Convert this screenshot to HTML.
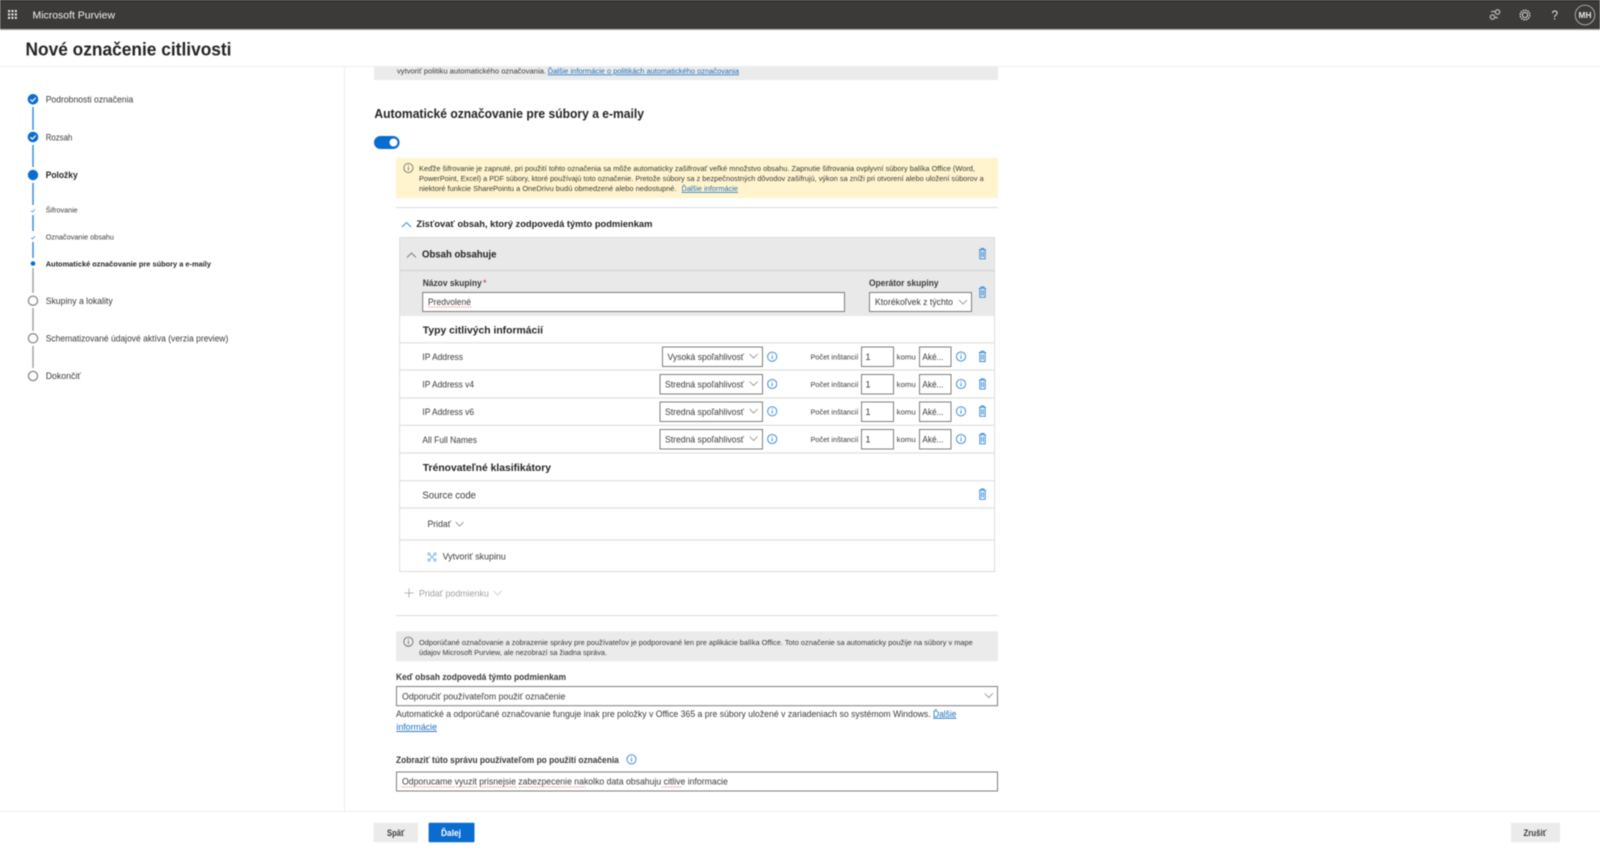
<!DOCTYPE html>
<html lang="sk">
<head>
<meta charset="utf-8">
<title>Nové označenie citlivosti</title>
<style>
html,body{margin:0;padding:0;background:#fff;width:1600px;height:852px;overflow:hidden}
svg{display:block;filter:blur(.4px)}
text{font-family:"Liberation Sans","Noto Sans CJK JP",sans-serif;fill:#3b3a39;font-size:9px;white-space:pre}
.b{font-weight:bold;fill:#252423}
.s{font-size:7.6px}
.m{font-size:8px}
.l{fill:#1a6fbf;text-decoration:underline}
.g{fill:#a19f9d}
.ln{fill:none;stroke:#e4e3e2;stroke-width:1.4}
.box{fill:#fff;stroke:#7f7e7d;stroke-width:1}
.ch{fill:none;stroke:#8a8886;stroke-width:.8}
.chl{fill:none;stroke:#c8c6c4;stroke-width:.8}
.sp{fill:none;stroke:#e06a6a;stroke-width:.7;stroke-dasharray:1.2 1}
</style>
</head>
<body>
<svg width="1600" height="852" viewBox="0 0 1600 852" xmlns="http://www.w3.org/2000/svg">
<defs>
<g id="tr" fill="none" stroke="#2f86d6" stroke-width=".9"><path d="M-3.6-4.2h7.2M-1.4-4.2v-1.3h2.8v1.3M-2.7-4.2v9h5.4v-9M-.9-2.4v5.4M.9-2.4v5.4"/></g>
<g id="inf"><circle r="4.6" fill="none" stroke="#2f86d6" stroke-width=".9"/><path d="M0-1v3.4M0-3v1" stroke="#2f86d6" stroke-width=".9"/></g>
<g id="infd"><circle r="4.6" fill="none" stroke="#605e5c" stroke-width=".8"/><path d="M0-1v3.4M0-3v1" stroke="#605e5c" stroke-width=".8"/></g>
<path id="dn" class="ch" d="M-4-2l4 4 4-4"/>
<path id="dnl" class="chl" d="M-4-2l4 4 4-4"/>
<g id="ck"><circle r="5.3" fill="#0b6cd0"/><path d="M-2.6.2l1.9 1.9 3.4-3.6" fill="none" stroke="#fff" stroke-width="1.2"/></g>
<g id="op"><circle r="4.6" fill="#fff" stroke="#8a8886" stroke-width="1.3"/></g>
<path id="sc" d="M-1.8.2l1.2 1.3 2.6-2.8" fill="none" stroke="#4a98e0" stroke-width=".8"/>
</defs>

<!-- top bar -->
<rect width="1600" height="30" fill="#3b3a39"/>
<rect width="1600" height="1" fill="#151515"/>
<rect y="29" width="1600" height="1.2" fill="#b8b7b5"/>
<g fill="#e8e8e8">
<rect x="8" y="10" width="2.1" height="2.1"/><rect x="11.4" y="10" width="2.1" height="2.1"/><rect x="14.8" y="10" width="2.1" height="2.1"/>
<rect x="8" y="13.4" width="2.1" height="2.1"/><rect x="11.4" y="13.4" width="2.1" height="2.1"/><rect x="14.8" y="13.4" width="2.1" height="2.1"/>
<rect x="8" y="16.8" width="2.1" height="2.1"/><rect x="11.4" y="16.8" width="2.1" height="2.1"/><rect x="14.8" y="16.8" width="2.1" height="2.1"/>
</g>
<text x="32.5" y="18.6" textLength="82.5" lengthAdjust="spacingAndGlyphs" style="font-size:10.5px;fill:#f2f2f2">Microsoft Purview</text>
<g fill="none" stroke="#b5b5b3" stroke-width="1.3">
<circle cx="1497.5" cy="12" r="2.2"/><circle cx="1492.5" cy="17" r="2.2"/><path d="M1491 11.5h4M1495 17.5h2v1"/>
</g>
<circle cx="1525" cy="15" r="2.6" fill="none" stroke="#d8d8d6" stroke-width="1"/>
<circle cx="1525" cy="15" r="4.8" fill="none" stroke="#d8d8d6" stroke-width="1.4" stroke-dasharray="1.6 .9"/>
<text x="1551.5" y="19.5" textLength="6.5" lengthAdjust="spacingAndGlyphs" style="font-size:13px;fill:#e4e4e4">?</text>
<circle cx="1585" cy="15" r="9.8" fill="none" stroke="#b5b5b3" stroke-width=".9"/>
<text x="1578.5" y="18" textLength="13" lengthAdjust="spacingAndGlyphs" style="font-size:8.5px;font-weight:bold;fill:#e8e8e8">MH</text>

<!-- title -->
<text x="25.5" y="55.4" textLength="206" lengthAdjust="spacingAndGlyphs" class="b" style="font-size:18.5px">Nové označenie citlivosti</text>
<rect y="66" width="1600" height="1" fill="#eeedec"/>
<rect x="344" y="67" width="1" height="744" fill="#eeedec"/>

<!-- stepper -->
<g stroke-width="1.4" fill="none">
<path stroke="#2b88e0" d="M33 107v23M33 145v22M33 183v22M33 215v16M33 242v16"/>
<path stroke="#a19f9d" d="M33 268v25M33 308v23M33 346v22"/>
</g>
<use href="#ck" x="33" y="99.3"/>
<use href="#ck" x="33" y="137"/>
<circle cx="33" cy="175" r="5.2" fill="#0b6cd0"/>
<use href="#sc" x="33" y="210.5"/>
<use href="#sc" x="33" y="237.5"/>
<circle cx="33" cy="263.5" r="2.3" fill="#0b6cd0"/>
<use href="#op" x="33" y="300.7"/>
<use href="#op" x="33" y="338.3"/>
<use href="#op" x="33" y="376"/>
<text x="45.7" y="102.6" textLength="87.6" lengthAdjust="spacingAndGlyphs">Podrobnosti označenia</text>
<text x="45.7" y="140.3" textLength="26.6" lengthAdjust="spacingAndGlyphs">Rozsah</text>
<text x="45.7" y="178" textLength="32" lengthAdjust="spacingAndGlyphs" class="b">Položky</text>
<text x="45.7" y="212.6" textLength="32" lengthAdjust="spacingAndGlyphs" class="s">Šifrovanie</text>
<text x="45.7" y="239.5" textLength="68.3" lengthAdjust="spacingAndGlyphs" class="s">Označovanie obsahu</text>
<text x="45.7" y="266.3" textLength="165.3" lengthAdjust="spacingAndGlyphs" class="b s">Automatické označovanie pre súbory a e-maily</text>
<text x="45.7" y="304" textLength="67" lengthAdjust="spacingAndGlyphs">Skupiny a lokality</text>
<text x="45.7" y="341.4" textLength="182.6" lengthAdjust="spacingAndGlyphs">Schematizované údajové aktíva (verzia preview)</text>
<text x="45.7" y="379" textLength="35" lengthAdjust="spacingAndGlyphs">Dokončiť</text>

<!-- top note -->
<rect x="374" y="67" width="624" height="13" fill="#ebebeb"/>
<text x="397" y="73.4" textLength="149" lengthAdjust="spacingAndGlyphs" class="s">vytvoriť politiku automatického označovania.</text>
<text x="547.7" y="73.4" textLength="191.3" lengthAdjust="spacingAndGlyphs" class="s l">Ďalšie informácie o politikách automatického označovania</text>

<text x="374.4" y="118" textLength="269.6" lengthAdjust="spacingAndGlyphs" class="b" style="font-size:12.5px">Automatické označovanie pre súbory a e-maily</text>
<rect x="374" y="136" width="25.6" height="13" rx="6.5" fill="#0b6cd0"/>
<circle cx="393.5" cy="142.5" r="4" fill="#fff"/>

<!-- warning -->
<rect x="396" y="158" width="602" height="40" fill="#fff4ce"/>
<use href="#infd" x="408.4" y="168"/>
<text x="419" y="171" textLength="556" lengthAdjust="spacingAndGlyphs" class="s">Keďže šifrovanie je zapnuté, pri použití tohto označenia sa môže automaticky zašifrovať veľké množstvo obsahu. Zapnutie šifrovania ovplyvní súbory balíka Office (Word,</text>
<text x="419" y="181" textLength="564.7" lengthAdjust="spacingAndGlyphs" class="s">PowerPoint, Excel) a PDF súbory, ktoré používajú toto označenie. Pretože súbory sa z bezpečnostných dôvodov zašifrujú, výkon sa zníži pri otvorení alebo uložení súborov a</text>
<text x="419" y="191" textLength="257.5" lengthAdjust="spacingAndGlyphs" class="s">niektoré funkcie SharePointu a OneDrivu budú obmedzené alebo nedostupné.</text>
<text x="681.5" y="191" textLength="56.5" lengthAdjust="spacingAndGlyphs" class="s l">Ďalšie informácie</text>
<rect x="396" y="207" width="602" height="1" fill="#dcdbda"/>

<path d="M402 227l4.5-4.5 4.5 4.5" fill="none" stroke="#2b88e0" stroke-width=".9"/>
<text x="416.4" y="227" textLength="236" lengthAdjust="spacingAndGlyphs" class="b">Zisťovať obsah, ktorý zodpovedá týmto podmienkam</text>

<!-- card -->
<rect x="399.6" y="237.5" width="595" height="334" fill="#fff" stroke="#dedddc" stroke-width="1"/>
<rect x="400" y="238" width="594" height="78" fill="#e9e9e9"/>
<path d="M400 270.5h594" style="fill:none;stroke:#d4d3d2;stroke-width:1.2"/>
<path d="M407 257.5l4.5-4.5 4.5 4.5" fill="none" stroke="#797775" stroke-width=".9"/>
<text x="422" y="257.5" textLength="74.5" lengthAdjust="spacingAndGlyphs" class="b" style="font-size:10px">Obsah obsahuje</text>
<use href="#tr" x="982.5" y="254"/>

<text x="422.7" y="286" textLength="59" lengthAdjust="spacingAndGlyphs" style="font-weight:bold;font-size:8.8px">Názov skupiny</text>
<text x="483" y="286" style="fill:#c4262e;font-size:9px">*</text>
<rect x="422.7" y="292.5" width="421.8" height="19" class="box"/>
<text x="428" y="305" textLength="43" lengthAdjust="spacingAndGlyphs">Predvolené</text>
<path class="sp" d="M428 307h43"/>
<text x="869" y="286" textLength="69.5" lengthAdjust="spacingAndGlyphs" style="font-weight:bold;font-size:8.8px">Operátor skupiny</text>
<rect x="869.5" y="292.5" width="102" height="19" class="box"/>
<text x="875" y="305" textLength="78" lengthAdjust="spacingAndGlyphs">Ktorékoľvek z týchto</text>
<use href="#dn" x="963" y="302"/>
<use href="#tr" x="982.5" y="292.5"/>

<text x="422.8" y="333.5" textLength="120.2" lengthAdjust="spacingAndGlyphs" class="b" style="font-size:10.5px">Typy citlivých informácií</text>
<path class="ln" d="M400 342.8h594M400 370h594M400 398h594M400 425.3h594M400 453h594M400 480.8h594M400 508h594M400 540h594"/>

<!-- row 1 -->
<text x="422.4" y="360" textLength="40.6" lengthAdjust="spacingAndGlyphs">IP Address</text>
<rect x="662.5" y="347" width="100" height="19.5" class="box"/>
<text x="667.5" y="360" textLength="76.5" lengthAdjust="spacingAndGlyphs">Vysoká spoľahlivosť</text>
<use href="#dn" x="753.6" y="356"/>
<use href="#inf" x="772.2" y="356.7"/>
<text x="810.5" y="359.5" textLength="47.9" lengthAdjust="spacingAndGlyphs" class="s">Počet inštancií</text>
<rect x="861.5" y="347" width="32" height="19.5" class="box"/>
<text x="865.5" y="360" style="font-size:9px">1</text>
<text x="896.7" y="359.5" textLength="19" lengthAdjust="spacingAndGlyphs" class="s">komu</text>
<rect x="919.5" y="347" width="31.5" height="19.5" class="box"/>
<text x="922.4" y="360" textLength="21" lengthAdjust="spacingAndGlyphs">Aké...</text>
<use href="#inf" x="961" y="356.5"/>
<use href="#tr" x="982.5" y="356.7"/>

<!-- row 2 -->
<text x="422.4" y="387.6" textLength="51.6" lengthAdjust="spacingAndGlyphs">IP Address v4</text>
<rect x="660" y="374.5" width="102.5" height="19.5" class="box"/>
<text x="665" y="387.5" textLength="79" lengthAdjust="spacingAndGlyphs">Stredná spoľahlivosť</text>
<use href="#dn" x="753.6" y="383.5"/>
<use href="#inf" x="772.2" y="384"/>
<text x="810.5" y="387" textLength="47.9" lengthAdjust="spacingAndGlyphs" class="s">Počet inštancií</text>
<rect x="861.5" y="374.5" width="32" height="19.5" class="box"/>
<text x="865.5" y="387.5" style="font-size:9px">1</text>
<text x="896.7" y="387" textLength="19" lengthAdjust="spacingAndGlyphs" class="s">komu</text>
<rect x="919.5" y="374.5" width="31.5" height="19.5" class="box"/>
<text x="922.4" y="387.5" textLength="21" lengthAdjust="spacingAndGlyphs">Aké...</text>
<use href="#inf" x="961" y="384"/>
<use href="#tr" x="982.5" y="384.3"/>

<!-- row 3 -->
<text x="422.4" y="415.2" textLength="51.6" lengthAdjust="spacingAndGlyphs">IP Address v6</text>
<rect x="660" y="402" width="102.5" height="19.5" class="box"/>
<text x="665" y="415" textLength="79" lengthAdjust="spacingAndGlyphs">Stredná spoľahlivosť</text>
<use href="#dn" x="753.6" y="411"/>
<use href="#inf" x="772.2" y="411.3"/>
<text x="810.5" y="414.5" textLength="47.9" lengthAdjust="spacingAndGlyphs" class="s">Počet inštancií</text>
<rect x="861.5" y="402" width="32" height="19.5" class="box"/>
<text x="865.5" y="415" style="font-size:9px">1</text>
<text x="896.7" y="414.5" textLength="19" lengthAdjust="spacingAndGlyphs" class="s">komu</text>
<rect x="919.5" y="402" width="31.5" height="19.5" class="box"/>
<text x="922.4" y="415" textLength="21" lengthAdjust="spacingAndGlyphs">Aké...</text>
<use href="#inf" x="961" y="411.3"/>
<use href="#tr" x="982.5" y="411.5"/>

<!-- row 4 -->
<text x="422.4" y="443" textLength="54.6" lengthAdjust="spacingAndGlyphs">All Full Names</text>
<rect x="660" y="429.5" width="102.5" height="19.5" class="box"/>
<text x="665" y="442.5" textLength="79" lengthAdjust="spacingAndGlyphs">Stredná spoľahlivosť</text>
<use href="#dn" x="753.6" y="438.5"/>
<use href="#inf" x="772.2" y="439"/>
<text x="810.5" y="442" textLength="47.9" lengthAdjust="spacingAndGlyphs" class="s">Počet inštancií</text>
<rect x="861.5" y="429.5" width="32" height="19.5" class="box"/>
<text x="865.5" y="442.5" style="font-size:9px">1</text>
<text x="896.7" y="442" textLength="19" lengthAdjust="spacingAndGlyphs" class="s">komu</text>
<rect x="919.5" y="429.5" width="31.5" height="19.5" class="box"/>
<text x="922.4" y="442.5" textLength="21" lengthAdjust="spacingAndGlyphs">Aké...</text>
<use href="#inf" x="961" y="439"/>
<use href="#tr" x="982.5" y="439"/>

<text x="422.8" y="471" textLength="128.2" lengthAdjust="spacingAndGlyphs" class="b" style="font-size:10.5px">Trénovateľné klasifikátory</text>
<text x="422.4" y="498.5" textLength="53.6" lengthAdjust="spacingAndGlyphs" style="font-size:10.5px">Source code</text>
<use href="#tr" x="982.5" y="494.5"/>
<text x="427.5" y="527" textLength="23.5" lengthAdjust="spacingAndGlyphs">Pridať</text>
<use href="#dn" x="459.6" y="524"/>
<g fill="none" stroke="#5ba4e6" stroke-width=".7">
<path d="M429.5 554.5l5 5M434.5 554.5l-5 5"/>
<circle cx="429" cy="554" r="1.2"/><circle cx="435" cy="554" r="1.2"/>
<circle cx="429" cy="560" r="1.2"/><circle cx="435" cy="560" r="1.2"/>
</g>
<text x="442.6" y="559.5" textLength="63.2" lengthAdjust="spacingAndGlyphs">Vytvoriť skupinu</text>

<path d="M404.5 593h9M409 588.5v9" stroke="#a19f9d" stroke-width=".8" fill="none"/>
<text x="419" y="596.5" textLength="69.8" lengthAdjust="spacingAndGlyphs" class="g">Pridať podmienku</text>
<use href="#dnl" x="497.5" y="593"/>

<rect x="396" y="615" width="602" height="1" fill="#dcdbda"/>

<!-- info note -->
<rect x="396" y="631.3" width="602" height="30" fill="#ebebeb"/>
<use href="#infd" x="408.4" y="641.7"/>
<text x="419" y="645.2" textLength="553.8" lengthAdjust="spacingAndGlyphs" class="s">Odporúčané označovanie a zobrazenie správy pre používateľov je podporované len pre aplikácie balíka Office. Toto označenie sa automaticky použije na súbory v mape</text>
<text x="419" y="655.2" textLength="188" lengthAdjust="spacingAndGlyphs" class="s">údajov Microsoft Purview, ale nezobrazí sa žiadna správa.</text>

<text x="396" y="680" textLength="170" lengthAdjust="spacingAndGlyphs" style="font-weight:bold;font-size:8.8px">Keď obsah zodpovedá týmto podmienkam</text>
<rect x="396.5" y="686.5" width="601" height="19.2" class="box"/>
<text x="402" y="699.3" textLength="163.4" lengthAdjust="spacingAndGlyphs">Odporučiť používateľom použiť označenie</text>
<use href="#dn" x="988.8" y="695.5"/>
<text x="396" y="716.8" textLength="534.7" lengthAdjust="spacingAndGlyphs">Automatické a odporúčané označovanie funguje inak pre položky v Office 365 a pre súbory uložené v zariadeniach so systémom Windows.</text>
<text x="933" y="716.8" textLength="23.4" lengthAdjust="spacingAndGlyphs" class="l">Ďalšie</text>
<text x="396.4" y="730" textLength="40.6" lengthAdjust="spacingAndGlyphs" class="l">informácie</text>

<text x="396" y="762.8" textLength="222.8" lengthAdjust="spacingAndGlyphs" style="font-weight:bold;font-size:8.8px">Zobraziť túto správu používateľom po použití označenia</text>
<use href="#inf" x="631.5" y="759.3"/>
<rect x="396.5" y="772" width="601" height="19" class="box"/>
<text x="402" y="784.5" textLength="325.8" lengthAdjust="spacingAndGlyphs">Odporucame vyuzit prisnejsie zabezpecenie nakolko data obsahuju citlive informacie</text>
<path class="sp" d="M402 787h53M456 787h22M480 787h37M519 787h67M662 787h19"/>

<!-- footer -->
<rect y="811" width="1600" height="1" fill="#eeedec"/>
<rect x="373.5" y="822.7" width="44.5" height="19.6" rx="1" fill="#ebebeb"/>
<text x="387" y="836" textLength="17.6" lengthAdjust="spacingAndGlyphs" style="font-weight:bold;font-size:9px">Späť</text>
<rect x="428.6" y="822.7" width="45.9" height="19.6" rx="1" fill="#0b6cd0"/>
<text x="441" y="836" textLength="20" lengthAdjust="spacingAndGlyphs" style="font-weight:bold;font-size:9px;fill:#fff">Ďalej</text>
<rect x="1511" y="822.7" width="49" height="19.6" rx="1" fill="#ebebeb"/>
<text x="1523.5" y="836" textLength="23" lengthAdjust="spacingAndGlyphs" style="font-weight:bold;font-size:9px">Zrušiť</text>
</svg>
</body>
</html>
